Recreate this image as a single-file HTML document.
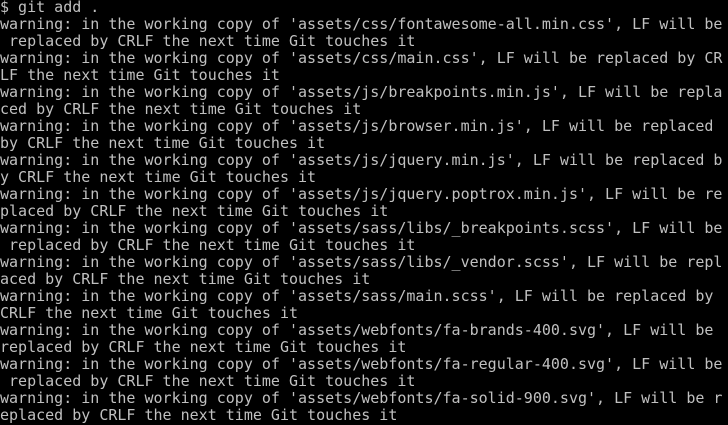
<!DOCTYPE html>
<html><head><style>
html,body{margin:0;padding:0;background:#000;width:728px;height:425px;overflow:hidden}
pre{margin:0;position:absolute;left:0;top:-1px;font-family:"DejaVu Sans Mono","Liberation Mono",monospace;font-size:15px;line-height:17px;color:#c0c0c0;white-space:pre}
</style></head><body><pre>$ git add .
warning: in the working copy of 'assets/css/fontawesome-all.min.css', LF will be
 replaced by CRLF the next time Git touches it
warning: in the working copy of 'assets/css/main.css', LF will be replaced by CR
LF the next time Git touches it
warning: in the working copy of 'assets/js/breakpoints.min.js', LF will be repla
ced by CRLF the next time Git touches it
warning: in the working copy of 'assets/js/browser.min.js', LF will be replaced
by CRLF the next time Git touches it
warning: in the working copy of 'assets/js/jquery.min.js', LF will be replaced b
y CRLF the next time Git touches it
warning: in the working copy of 'assets/js/jquery.poptrox.min.js', LF will be re
placed by CRLF the next time Git touches it
warning: in the working copy of 'assets/sass/libs/_breakpoints.scss', LF will be
 replaced by CRLF the next time Git touches it
warning: in the working copy of 'assets/sass/libs/_vendor.scss', LF will be repl
aced by CRLF the next time Git touches it
warning: in the working copy of 'assets/sass/main.scss', LF will be replaced by
CRLF the next time Git touches it
warning: in the working copy of 'assets/webfonts/fa-brands-400.svg', LF will be
replaced by CRLF the next time Git touches it
warning: in the working copy of 'assets/webfonts/fa-regular-400.svg', LF will be
 replaced by CRLF the next time Git touches it
warning: in the working copy of 'assets/webfonts/fa-solid-900.svg', LF will be r
eplaced by CRLF the next time Git touches it</pre></body></html>
